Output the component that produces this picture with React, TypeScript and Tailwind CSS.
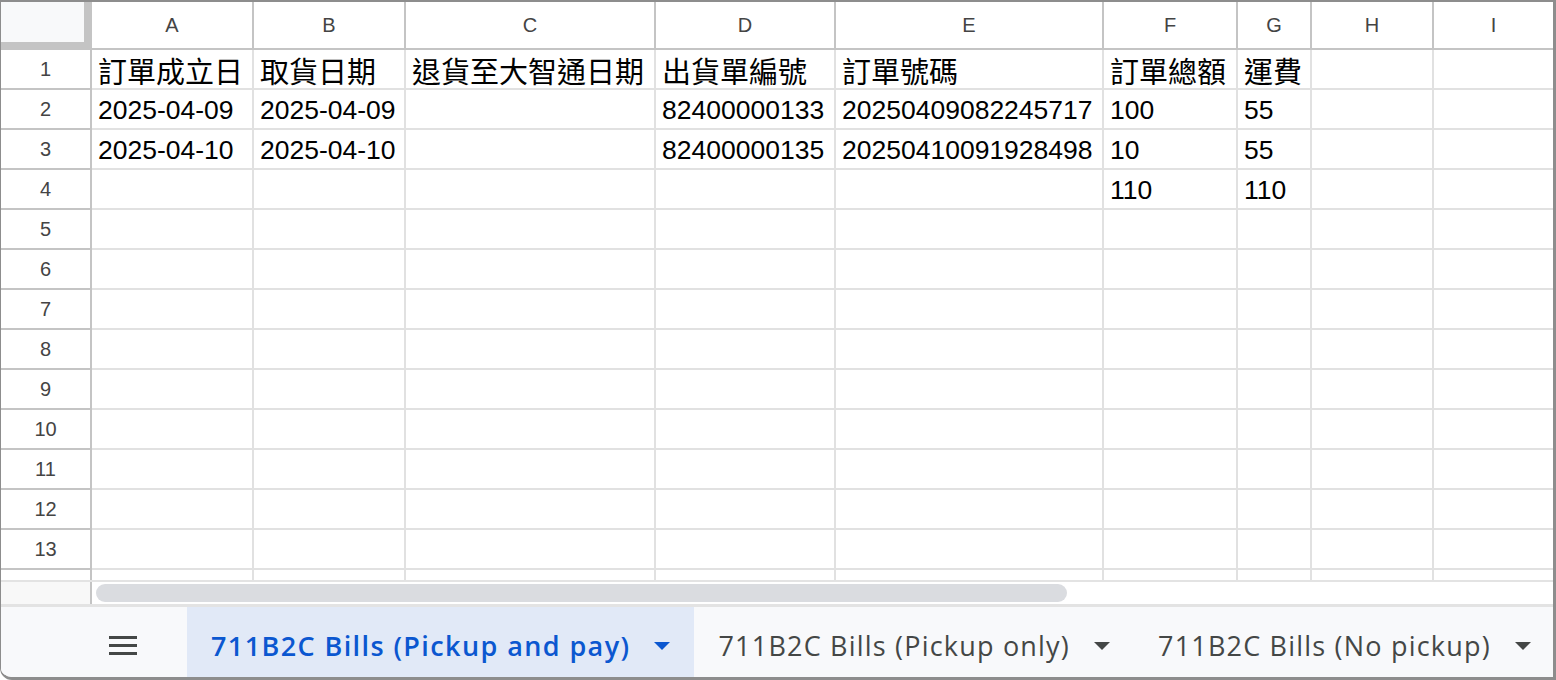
import React from 'react';

const COLS = [
  { key: 'A', w: 'w-[162px]' },
  { key: 'B', w: 'w-[152px]' },
  { key: 'C', w: 'w-[250px]' },
  { key: 'D', w: 'w-[180px]' },
  { key: 'E', w: 'w-[268px]' },
  { key: 'F', w: 'w-[134px]' },
  { key: 'G', w: 'w-[74px]' },
  { key: 'H', w: 'w-[122px]' },
  { key: 'I', w: 'w-[119px]' },
];

const ROWS: string[][] = [
  ['訂單成立日', '取貨日期', '退貨至大智通日期', '出貨單編號', '訂單號碼', '訂單總額', '運費'],
  ['2025-04-09', '2025-04-09', '', '82400000133', '20250409082245717', '100', '55'],
  ['2025-04-10', '2025-04-10', '', '82400000135', '20250410091928498', '10', '55'],
  ['', '', '', '', '', '110', '110'],
];

const TOTAL_ROWS = 13;

function Caret({ className }: { className: string }) {
  return (
    <svg width="16" height="8" viewBox="0 0 16 8" className={className}>
      <path d="M0 0h16L8 8z" fill="currentColor" />
    </svg>
  );
}

function SheetTab({ label, active }: { label: string; active?: boolean }) {
  return (
    <div
      className={`h-full flex items-center gap-[24px] pl-[24px] pr-[24px] pt-[6px] ${
        active ? 'bg-[#e1e9f7] text-[#0b57d0] font-semibold tracking-[1.4px]' : 'text-[#444746] tracking-[1.2px]'
      }`}
    >
      <span className="text-[27px] leading-none whitespace-nowrap font-['Open_Sans',sans-serif]">{label}</span>
      <Caret className="mt-[2px]" />
    </div>
  );
}

export default function App() {
  return (
    <div className="w-[1556px] h-[680px] bg-white border-t-2 border-l border-r-[3px] border-b-[3px] border-[#8d8d8d] rounded-bl-[12px] overflow-hidden flex flex-col font-['Liberation_Sans','Noto_Sans_CJK_TC',sans-serif]">
      {/* Column headers */}
      <div className="flex h-[48px] shrink-0">
        <div className="w-[91px] shrink-0 bg-[#f8f9fa] border-r-[8px] border-b-[8px] border-[#c4c4c4]" />
        {COLS.map((c, i) => (
          <div
            key={c.key}
            className={`${c.w} shrink-0 flex items-center justify-center text-[20px] text-[#444] border-b-2 border-[#c4c4c4] ${
              i < COLS.length - 1 ? 'border-r-2' : ''
            }`}
          >
            {c.key}
          </div>
        ))}
      </div>

      {/* Rows */}
      {Array.from({ length: TOTAL_ROWS }).map((_, r) => {
        const data = ROWS[r] ?? [];
        return (
          <div key={r} className="flex h-[40px] shrink-0">
            <div className="w-[91px] shrink-0 flex items-center justify-center text-[20px] text-[#444] border-r-2 border-b-2 border-[#c4c4c4]">
              {r + 1}
            </div>
            {COLS.map((c, i) => (
              <div
                key={c.key}
                className={`${c.w} shrink-0 flex items-center pl-[6px] pt-[2px] leading-none whitespace-nowrap overflow-hidden text-black border-b-2 border-[#e1e1e1] ${
                  i < COLS.length - 1 ? 'border-r-2' : ''
                } ${r === 0 ? "text-[29px] font-['Noto_Sans_CJK_TC',sans-serif]" : 'text-[26.5px]'}`}
              >
                {data[i] ?? ''}
              </div>
            ))}
          </div>
        );
      })}

      {/* Partial row 14 */}
      <div className="flex h-[10px] shrink-0">
        <div className="w-[91px] shrink-0 border-r-2 border-[#c4c4c4]" />
        {COLS.map((c, i) => (
          <div key={c.key} className={`${c.w} shrink-0 border-[#e1e1e1] ${i < COLS.length - 1 ? 'border-r-2' : ''}`} />
        ))}
      </div>

      {/* Horizontal scroll */}
      <div className="flex h-[27px] shrink-0 border-t-2 border-b-[3px] border-[#e3e3e3]">
        <div className="w-[91px] shrink-0 bg-[#f8f8f8] border-r-2 border-[#c4c4c4]" />
        <div className="flex-1 pl-[4px] pt-[2px]">
          <div className="w-[971px] h-[18px] rounded-full bg-[#dadce0]" />
        </div>
      </div>

      {/* Sheet tabs */}
      <div className="flex-1 flex bg-[#f8f9fb]">
        <div className="w-[186px] shrink-0 flex items-center pl-[108px] pt-[6px]">
          <div className="flex flex-col gap-[5px]">
            <span className="block w-[28px] h-[3px] bg-[#444746]" />
            <span className="block w-[28px] h-[3px] bg-[#444746]" />
            <span className="block w-[28px] h-[3px] bg-[#444746]" />
          </div>
        </div>
        <SheetTab label="711B2C Bills (Pickup and pay)" active />
        <SheetTab label="711B2C Bills (Pickup only)" />
        <SheetTab label="711B2C Bills (No pickup)" />
      </div>
    </div>
  );
}
